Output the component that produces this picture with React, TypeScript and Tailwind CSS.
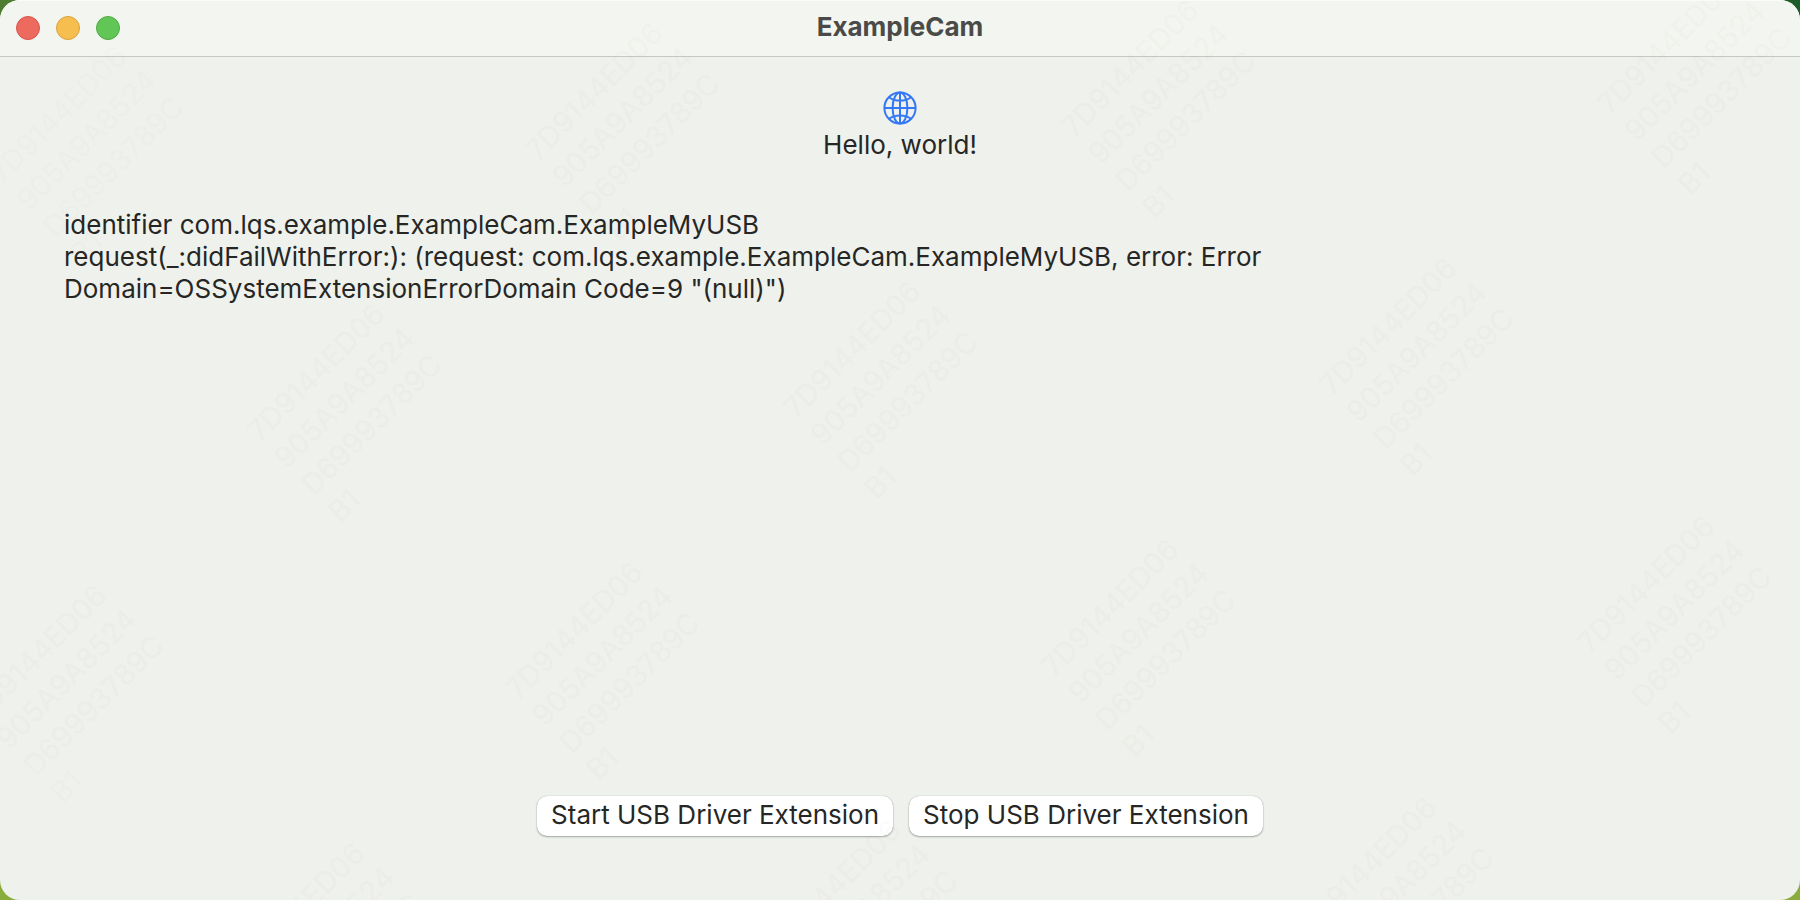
const MARK_LINES = ["7D9144ED06", "905A9A8524", "D69993789C", "B1"];

// Origin of each watermark, row by row. Rows are shifted right and down from
// the one above, and rise a little towards the right.
const MARKS = [
    { x: 2, y: 185 },
    { x: 538, y: 162 },
    { x: 1074, y: 139 },
    { x: 1610, y: 116 },
    { x: 260, y: 443 },
    { x: 796, y: 420 },
    { x: 1332, y: 397 },
    { x: -18, y: 724 },
    { x: 518, y: 701 },
    { x: 1054, y: 678 },
    { x: 1590, y: 655 },
    { x: 240, y: 982 },
    { x: 776, y: 959 },
    { x: 1312, y: 936 },
];

const LOG_LINES = [
    "identifier com.lqs.example.ExampleCam.ExampleMyUSB",
    "request(_:didFailWithError:): (request: com.lqs.example.ExampleCam.ExampleMyUSB, error: Error Domain=OSSystemExtensionErrorDomain Code=9 \"(null)\")",
];

function Watermark() {
    return (
        <svg
            className="pointer-events-none absolute inset-0 h-full w-full fill-black opacity-[0.01]"
            aria-hidden="true"
        >
            {MARKS.map(({ x, y }) => (
                <text
                    key={`${x}-${y}`}
                    transform={`translate(${x} ${y}) rotate(-45)`}
                    fontSize="29"
                >
                    {MARK_LINES.map((line, i) => (
                        <tspan key={line} x="0" y={i * 38}>
                            {line}
                        </tspan>
                    ))}
                </text>
            ))}
        </svg>
    );
}

function Globe() {
    return (
        <svg
            className="size-[34px] text-[#3478f6]"
            viewBox="0 0 34 34"
            fill="none"
            stroke="currentColor"
            strokeWidth="2"
            aria-hidden="true"
        >
            <circle cx="17" cy="17" r="15.6" />
            <ellipse cx="17" cy="17" rx="7.4" ry="15.6" />
            <path d="M17 1.4v31.2M1.4 17h31.2" />
            <path d="M6 6.2c2.8 2.2 6.6 3.4 11 3.4s8.2-1.2 11-3.4" />
            <path d="M6 27.8c2.8-2.2 6.6-3.4 11-3.4s8.2 1.2 11 3.4" />
        </svg>
    );
}

function PushButton({ children }: { children: string }) {
    return (
        <button
            type="button"
            className="h-10 rounded-[10px] bg-white px-3.5 pb-0.5 shadow-[0_0_1px_rgba(0,0,0,0.3),0_1px_2px_rgba(0,0,0,0.3)] active:bg-gray-100"
        >
            {children}
        </button>
    );
}

export default function App() {
    return (
        <div className="flex min-h-screen bg-[linear-gradient(to_bottom,transparent_50%,#8aac3c_50%),linear-gradient(to_right,#4f7c30_50%,#1f5c2c_50%)] font-['Inter',sans-serif] text-[26px] leading-8 text-[#262725]">
            <div className="relative flex flex-1 flex-col overflow-hidden rounded-[20px] bg-[#eff1ec]">
                <header className="grid h-[57px] grid-cols-[1fr_auto_1fr] items-center border-b border-[#c6c8c3] bg-[#f3f6f0] px-4 shadow-[inset_0_1px_0_#fbfcfa]">
                    <div className="flex gap-4">
                        <button type="button" aria-label="Close" className="size-6 rounded-full border border-[#d9574c] bg-[#ec6b5f]" />
                        <button type="button" aria-label="Minimize" className="size-6 rounded-full border border-[#dba23b] bg-[#f5bf4f]" />
                        <button type="button" aria-label="Zoom" className="size-6 rounded-full border border-[#51ac42] bg-[#62c655]" />
                    </div>
                    <h1 className="pb-0.5 font-bold text-[#4a4b49]">ExampleCam</h1>
                </header>

                <main className="flex flex-1 flex-col px-16 pt-[34px] pb-16">
                    <div className="flex flex-col items-center gap-1">
                        <Globe />
                        <p>Hello, world!</p>
                    </div>

                    <div className="mt-12 max-w-[1240px]">
                        {LOG_LINES.map((line) => (
                            <p key={line}>{line}</p>
                        ))}
                    </div>

                    <div className="mt-auto flex justify-center gap-4">
                        <PushButton>Start USB Driver Extension</PushButton>
                        <PushButton>Stop USB Driver Extension</PushButton>
                    </div>
                </main>

                <Watermark />
            </div>
        </div>
    );
}
